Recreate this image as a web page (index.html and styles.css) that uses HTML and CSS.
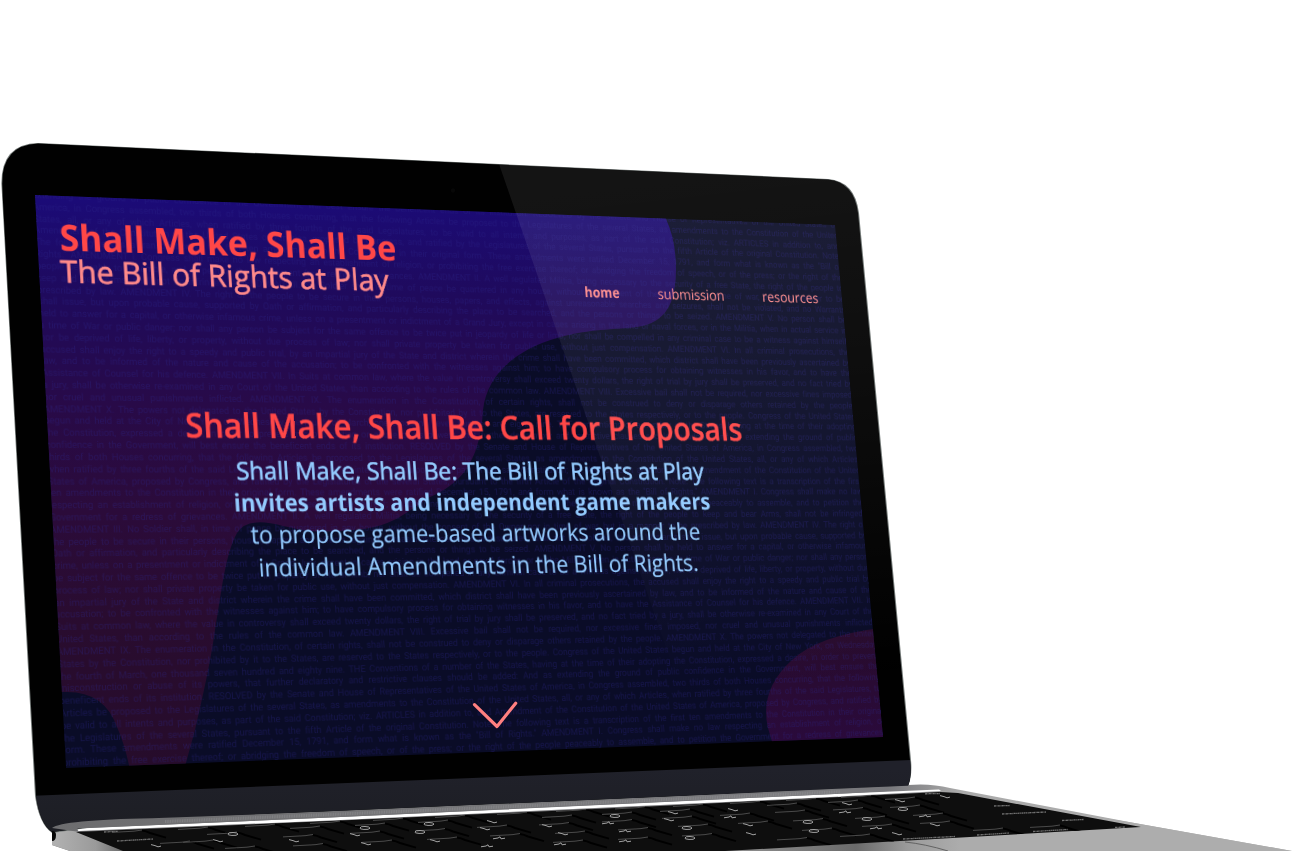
FILE: index.html
```html
<!DOCTYPE html>
<html lang="en">
<head>
<meta charset="utf-8">
<title>Shall Make, Shall Be</title>
<link rel="stylesheet" href="styles.css">
</head>
<body>
<main class="scene">
<svg class="layer" viewBox="0 0 1300 851" aria-hidden="true">
  <defs>
    <linearGradient id="blob" gradientUnits="userSpaceOnUse" x1="0" y1="200" x2="0" y2="768">
      <stop offset="0" stop-color="#1b0b77"/><stop offset=".17" stop-color="#1f0a5c"/>
      <stop offset=".36" stop-color="#280a48"/><stop offset=".55" stop-color="#2b0b3a"/>
      <stop offset=".75" stop-color="#290c2f"/><stop offset="1" stop-color="#260c2b"/>
    </linearGradient>
    <linearGradient id="blob2" x1="0" y1="0" x2="0" y2="1"><stop offset="0" stop-color="#280c2c"/><stop offset="1" stop-color="#2a0a3c"/></linearGradient>
    <linearGradient id="palm" gradientUnits="userSpaceOnUse" x1="700" y1="0" x2="960" y2="0">
      <stop offset="0" stop-color="#999"/><stop offset=".6" stop-color="#6b6b6b"/><stop offset=".8" stop-color="#9b9b9b"/><stop offset="1" stop-color="#acacac"/>
    </linearGradient>
    <linearGradient id="side" gradientUnits="userSpaceOnUse" x1="52" y1="0" x2="125" y2="0">
      <stop offset="0" stop-color="#b2b2b2"/><stop offset=".6" stop-color="#9a9a9a"/><stop offset="1" stop-color="#666"/>
    </linearGradient>
    <linearGradient id="deck" gradientUnits="userSpaceOnUse" x1="50" y1="0" x2="960" y2="0">
      <stop offset="0" stop-color="#6d6d6f"/><stop offset=".85" stop-color="#7b7b7e"/><stop offset=".92" stop-color="#77777b"/><stop offset=".96" stop-color="#8f8f91"/><stop offset="1" stop-color="#ababab"/>
    </linearGradient>
    <linearGradient id="chin" gradientUnits="userSpaceOnUse" x1="0" y1="770" x2="0" y2="825"><stop offset="0" stop-color="#20212a"/><stop offset="1" stop-color="#1d1e24"/></linearGradient>
    <filter id="soft" x="-5%" y="-20%" width="110%" height="140%"><feGaussianBlur stdDeviation=".45"/></filter>
    <clipPath id="display"><path d="M35 195L835 225L883 737L66 768Z"/></clipPath>
    <clipPath id="lid"><path d="M38 143.5L828 179.5Q854 182 858 213L910 760Q912 776 908 786L150 819L52 832Q40 824 36 796L2 184Q2 145 38 143.5Z"/></clipPath>
    <clipPath id="well"><path d="M76 832L330 821L660 806L940 792L958 793L1141 827L900 841L725 851H123Z"/></clipPath>
    <g id="gap"><path d="M-30 2.4L-8 1.2L0 0" stroke="#4a4a4a" stroke-width="1"/><path d="M0 .5Q4 1 8 3L24 7.6" stroke="#000" stroke-width="2" fill="none"/></g>
    <path id="ring" d="M-5 0Q-5 -1.7 0 -1.5T5 .2Q4 1.8 -1 1.4T-5 0Z"/>
    <path id="hook" d="M-5 -1.4L-1 -.4Q2 1.8 5 .1"/>
    <path id="cross" d="M-6 .8L-1 0L1 -1.2L2 .8L6 .2"/>
  </defs>

  <!-- laptop base -->
  <path fill="url(#deck)" d="M52 826Q60 821 150 818L908 785Q930 783 950 788L1133 822.7L1292 851H70L52 845Z"/>
  <path fill="#adadad" d="M930 789L1133 822.7L1292 851H880L880 842L1140 826.5Z"/>
  <path fill="url(#side)" d="M52 828L77 831L126 851H70L52 845Z"/>
  <path fill="url(#palm)" d="M700 852L900 840.7L1000 834V851Z"/>
  <path fill="none" stroke="#626262" d="M905 842Q925 844 948 851"/>
  <path fill="#0e0e0e" d="M76 832L330 821L660 806L940 792L958 793L1141 827L900 841L725 851H123Z"/>
  <g clip-path="url(#well)">
  <g fill="none" filter="url(#soft)">
    <use href="#gap" x="142" y="830"/><use href="#gap" x="208" y="827"/><use href="#gap" x="275" y="824"/><use href="#gap" x="190" y="841"/><use href="#gap" x="213" y="840"/><use href="#gap" x="237" y="832"/>
    <use href="#gap" x="340" y="821"/><use href="#gap" x="403" y="818"/><use href="#gap" x="465" y="815"/><use href="#gap" x="527" y="812"/><use href="#gap" x="320" y="826"/><use href="#gap" x="385" y="823"/><use href="#gap" x="448" y="820"/><use href="#gap" x="313" y="834.5"/><use href="#gap" x="380" y="831"/><use href="#gap" x="445" y="828.5"/><use href="#gap" x="507" y="825"/><use href="#gap" x="323" y="843.5"/><use href="#gap" x="392" y="840"/><use href="#gap" x="457" y="837"/><use href="#gap" x="520" y="833.5"/><use href="#gap" x="255" y="846"/>
    <use href="#gap" x="586" y="809"/><use href="#gap" x="645" y="806.5"/><use href="#gap" x="703" y="804"/><use href="#gap" x="760" y="801"/><use href="#gap" x="572" y="815"/><use href="#gap" x="632" y="812"/><use href="#gap" x="690" y="809"/><use href="#gap" x="569" y="822.5"/><use href="#gap" x="632" y="819.5"/><use href="#gap" x="692" y="816"/><use href="#gap" x="750" y="813"/><use href="#gap" x="585" y="831"/><use href="#gap" x="648" y="827.5"/><use href="#gap" x="708" y="824"/><use href="#gap" x="768" y="821"/><use href="#gap" x="583" y="840"/><use href="#gap" x="648" y="837"/><use href="#gap" x="712" y="833.5"/>
    <use href="#gap" x="816" y="798"/><use href="#gap" x="871" y="795"/><use href="#gap" x="797" y="803"/><use href="#gap" x="858" y="800"/><use href="#gap" x="915" y="797"/><use href="#gap" x="805" y="810"/><use href="#gap" x="863" y="807.5"/><use href="#gap" x="920" y="805"/><use href="#gap" x="823" y="818.5"/><use href="#gap" x="885" y="816"/><use href="#gap" x="943" y="813"/><use href="#gap" x="832" y="828"/><use href="#gap" x="892" y="824"/><use href="#gap" x="950" y="821"/><use href="#gap" x="807" y="837.5"/><use href="#gap" x="870" y="834"/><use href="#gap" x="1003" y="828"/><use href="#gap" x="1060" y="825"/>
  </g>
  <g fill="none" stroke="#a2a2a2" stroke-width="1" filter="url(#soft)">
    <use href="#ring" x="365" y="828"/><use href="#ring" x="429" y="824"/><use href="#hook" x="355" y="835"/><use href="#ring" x="420" y="832"/><use href="#hook" x="492" y="822"/><use href="#hook" x="485" y="829"/><use href="#hook" x="435" y="841"/><use href="#cross" x="499" y="838"/><use href="#hook" x="294" y="841"/><use href="#hook" x="366" y="844"/><use href="#cross" x="487" y="846"/>
    <use href="#ring" x="615" y="816"/><use href="#hook" x="673" y="813"/><use href="#hook" x="733" y="810"/><use href="#cross" x="608" y="823"/><use href="#hook" x="669" y="820"/><use href="#cross" x="730" y="817"/><use href="#hook" x="547" y="826"/><use href="#cross" x="625" y="831"/><use href="#ring" x="687" y="828"/><use href="#hook" x="748" y="825"/><use href="#hook" x="563" y="834"/><use href="#cross" x="560" y="844"/><use href="#cross" x="625" y="841"/><use href="#ring" x="690" y="838"/><use href="#hook" x="751" y="834"/>
    <use href="#hook" x="847" y="804"/><use href="#cross" x="845" y="812"/><use href="#ring" x="903" y="809"/><use href="#ring" x="867" y="819"/><use href="#cross" x="925" y="816"/><use href="#ring" x="808" y="822"/><use href="#ring" x="814" y="831"/><use href="#cross" x="876" y="828"/><use href="#hook" x="935" y="825"/><use href="#hook" x="897" y="834"/><use href="#hook" x="900" y="801"/><use href="#hook" x="945" y="797"/><use href="#ring" x="233" y="834"/><use href="#hook" x="156" y="846"/><use href="#hook" x="218" y="841"/>
  </g>
  <g fill="none" stroke="#707070" stroke-width="1.3" stroke-dasharray="2 .5 1 .4" filter="url(#soft)">
    <path d="M117 841L153 839M104 832L118 831.3M994 806L1010 805.5M1002 814L1046 812M1062 820.5L1084 819.5M1033 831.5L1068 829.5M977 835L1009 833M903 839L955 836.5M1115 827.5L1125 827M925 793.8L940 793.5"/>
  </g>
  </g>
  <path fill="none" stroke="#fff" stroke-width="2.8" stroke-linecap="round" d="M79 829.7L330 819L660 803.6L840 795.2"/>
  <path fill="#fff" d="M838 793.8L939 789.5L941 791L838 796.5Z"/>

  <!-- lid, bezel and chin -->
  <path fill="#747a78" d="M38 143L828 179Q855 181 859 213L911 760Q912.5 776 908 786L150 819L52 833Q39 824 35 796L1.4 184Q1 144 38 143Z"/>
  <g clip-path="url(#lid)">
    <path fill="#010101" d="M2.4 143H915V835H0Z"/>
    <path fill="url(#chin)" d="M30 796L911 760L915 835H30Z"/>
  </g>
  <path fill="url(#deck)" d="M52 828Q62 820 152 818.3L330 811.8L660 797.2L832 789L925 785L905 790L840 793.7L660 802L330 817.4L78 828.4Q74 830 80 832Z"/>
  <path fill="none" stroke="#a0a0a3" stroke-width="3.2" stroke-dasharray="1 .7" opacity=".35" d="M165 821.5L330 814.5L660 799.8L840 791.8"/>
  <path fill="#050505" d="M52 831Q56 831 56 835Q56 841 52 841Z"/>
  <circle cx="453" cy="190.5" r="2.2" fill="#070707"/>

  <!-- display artwork -->
  <g clip-path="url(#display)">
    <path fill="#0a0c27" d="M30 190H890V770H30Z"/>
    <path fill="url(#blob)" d="M30 190H658L666 219Q676 240 676 270Q676 288 671 302Q662 325 633 327.5C600 330 580 331 557 338C515 350 487 375 483 410C480 465 458 485 430 497C410 510 395 524 367 528.5C310 535 305 530 283 526Q247 516 237 533C225 555 222 590 215 630C210 665 203 695 195 730L184 770H130Q125 745 117 727Q104 690 63 692L30 690Z"/>
    <path fill="url(#blob2)" d="M890 627Q820 634 792 660Q759 690 768 728L773 745H890Z"/>
  </g>
</svg>

<section class="display">
  <div class="print" aria-hidden="true">
    <p>extending the ground of public confidence in the Government, will best ensure the beneficent ends of its institution. RESOLVED by the Senate and House of Representatives of the United States of</p>
    <p>America, in Congress assembled, two thirds of both Houses concurring, that the following Articles be proposed to the Legislatures of the several States, as amendments to the Constitution of the United</p>
    <p>States, all, or any of which Articles, when ratified by three fourths of the said Legislatures, to be valid to all intents and purposes, as part of the said Constitution; viz. ARTICLES in addition to, and</p>
    <p>Amendment of the Constitution of the United States of America, proposed by Congress, and ratified by the Legislatures of the several States, pursuant to the fifth Article of the original Constitution. Note:</p>
    <p>The following text is a transcription of the first ten amendments to the Constitution in their original form. These amendments were ratified December 15, 1791, and form what is known as the "Bill of</p>
    <p>Rights." AMENDMENT I. Congress shall make no law respecting an establishment of religion, or prohibiting the free exercise thereof; or abridging the freedom of speech, or of the press; or the right of the</p>
    <p>people peaceably to assemble, and to petition the Government for a redress of grievances. AMENDMENT II. A well regulated Militia, being necessary to the security of a free State, the right of the people to</p>
    <p>keep and bear Arms, shall not be infringed. AMENDMENT III. No Soldier shall, in time of peace be quartered in any house, without the consent of the Owner, nor in time of war, but in a manner to be</p>
    <p>prescribed by law. AMENDMENT IV. The right of the people to be secure in their persons, houses, papers, and effects, against unreasonable searches and seizures, shall not be violated, and no Warrants</p>
    <p>shall issue, but upon probable cause, supported by Oath or affirmation, and particularly describing the place to be searched, and the persons or things to be seized. AMENDMENT V. No person shall be</p>
    <p>held to answer for a capital, or otherwise infamous crime, unless on a presentment or indictment of a Grand Jury, except in cases arising in the land or naval forces, or in the Militia, when in actual service in</p>
    <p>a time of War or public danger; nor shall any person be subject for the same offence to be twice put in jeopardy of life or limb; nor shall be compelled in any criminal case to be a witness against himself,</p>
    <p>nor be deprived of life, liberty, or property, without due process of law; nor shall private property be taken for public use, without just compensation. AMENDMENT VI. In all criminal prosecutions, the</p>
    <p>accused shall enjoy the right to a speedy and public trial, by an impartial jury of the State and district wherein the crime shall have been committed, which district shall have been previously ascertained by</p>
    <p>law, and to be informed of the nature and cause of the accusation; to be confronted with the witnesses against him; to have compulsory process for obtaining witnesses in his favor, and to have the</p>
    <p>Assistance of Counsel for his defence. AMENDMENT VII. In Suits at common law, where the value in controversy shall exceed twenty dollars, the right of trial by jury shall be preserved, and no fact tried by</p>
    <p>a jury, shall be otherwise re-examined in any Court of the United States, than according to the rules of the common law. AMENDMENT VIII. Excessive bail shall not be required, nor excessive fines imposed,</p>
    <p>nor cruel and unusual punishments inflicted. AMENDMENT IX. The enumeration in the Constitution, of certain rights, shall not be construed to deny or disparage others retained by the people.</p>
    <p>AMENDMENT X. The powers not delegated to the United States by the Constitution, nor prohibited by it to the States, are reserved to the States respectively, or to the people. Congress of the United States</p>
    <p>begun and held at the City of New York, on Wednesday the fourth of March, one thousand seven hundred and eighty nine. THE Conventions of a number of the States, having at the time of their adopting</p>
    <p>the Constitution, expressed a desire, in order to prevent misconstruction or abuse of its powers, that further declaratory and restrictive clauses should be added: And as extending the ground of public</p>
    <p>confidence in the Government, will best ensure the beneficent ends of its institution. RESOLVED by the Senate and House of Representatives of the United States of America, in Congress assembled, two</p>
    <p>thirds of both Houses concurring, that the following Articles be proposed to the Legislatures of the several States, as amendments to the Constitution of the United States, all, or any of which Articles,</p>
    <p>when ratified by three fourths of the said Legislatures, to be valid to all intents and purposes, as part of the said Constitution; viz. ARTICLES in addition to, and Amendment of the Constitution of the United</p>
    <p>States of America, proposed by Congress, and ratified by the Legislatures of the several States, pursuant to the fifth Article of the original Constitution. Note: The following text is a transcription of the first</p>
    <p>ten amendments to the Constitution in their original form. These amendments were ratified December 15, 1791, and form what is known as the "Bill of Rights." AMENDMENT I. Congress shall make no law</p>
    <p>respecting an establishment of religion, or prohibiting the free exercise thereof; or abridging the freedom of speech, or of the press; or the right of the people peaceably to assemble, and to petition the</p>
    <p>Government for a redress of grievances. AMENDMENT II. A well regulated Militia, being necessary to the security of a free State, the right of the people to keep and bear Arms, shall not be infringed.</p>
    <p>AMENDMENT III. No Soldier shall, in time of peace be quartered in any house, without the consent of the Owner, nor in time of war, but in a manner to be prescribed by law. AMENDMENT IV. The right of</p>
    <p>the people to be secure in their persons, houses, papers, and effects, against unreasonable searches and seizures, shall not be violated, and no Warrants shall issue, but upon probable cause, supported by</p>
    <p>Oath or affirmation, and particularly describing the place to be searched, and the persons or things to be seized. AMENDMENT V. No person shall be held to answer for a capital, or otherwise infamous</p>
    <p>crime, unless on a presentment or indictment of a Grand Jury, except in cases arising in the land or naval forces, or in the Militia, when in actual service in time of War or public danger; nor shall any person</p>
    <p>be subject for the same offence to be twice put in jeopardy of life or limb; nor shall be compelled in any criminal case to be a witness against himself, nor be deprived of life, liberty, or property, without due</p>
    <p>process of law; nor shall private property be taken for public use, without just compensation. AMENDMENT VI. In all criminal prosecutions, the accused shall enjoy the right to a speedy and public trial by</p>
    <p>an impartial jury of the State and district wherein the crime shall have been committed, which district shall have been previously ascertained by law, and to be informed of the nature and cause of the</p>
    <p>accusation; to be confronted with the witnesses against him; to have compulsory process for obtaining witnesses in his favor, and to have the Assistance of Counsel for his defence. AMENDMENT VII. In</p>
    <p>Suits at common law, where the value in controversy shall exceed twenty dollars, the right of trial by jury shall be preserved, and no fact tried by a jury, shall be otherwise re-examined in any Court of the</p>
    <p>United States, than according to the rules of the common law. AMENDMENT VIII. Excessive bail shall not be required, nor excessive fines imposed, nor cruel and unusual punishments inflicted.</p>
    <p>AMENDMENT IX. The enumeration in the Constitution, of certain rights, shall not be construed to deny or disparage others retained by the people. AMENDMENT X. The powers not delegated to the United</p>
    <p>States by the Constitution, nor prohibited by it to the States, are reserved to the States respectively, or to the people. Congress of the United States begun and held at the City of New York, on Wednesday</p>
    <p>the fourth of March, one thousand seven hundred and eighty nine. THE Conventions of a number of the States, having at the time of their adopting the Constitution, expressed a desire, in order to prevent</p>
    <p>misconstruction or abuse of its powers, that further declaratory and restrictive clauses should be added: And as extending the ground of public confidence in the Government, will best ensure the</p>
    <p>beneficent ends of its institution. RESOLVED by the Senate and House of Representatives of the United States of America, in Congress assembled, two thirds of both Houses concurring, that the following</p>
    <p>Articles be proposed to the Legislatures of the several States, as amendments to the Constitution of the United States, all, or any of which Articles, when ratified by three fourths of the said Legislatures, to</p>
    <p>be valid to all intents and purposes, as part of the said Constitution; viz. ARTICLES in addition to, and Amendment of the Constitution of the United States of America, proposed by Congress, and ratified by</p>
    <p>the Legislatures of the several States, pursuant to the fifth Article of the original Constitution. Note: The following text is a transcription of the first ten amendments to the Constitution in their original</p>
    <p>form. These amendments were ratified December 15, 1791, and form what is known as the "Bill of Rights." AMENDMENT I. Congress shall make no law respecting an establishment of religion, or</p>
    <p>prohibiting the free exercise thereof; or abridging the freedom of speech, or of the press; or the right of the people peaceably to assemble, and to petition the Government for a redress of grievances.</p>
  </div>
  <svg class="copy" viewBox="0 0 900 560">
    <text class="brand" x="22.5" y="55" textLength="356" lengthAdjust="spacingAndGlyphs">Shall Make, Shall Be</text>
    <text class="tagline" x="21.5" y="86.6" textLength="346" lengthAdjust="spacingAndGlyphs">The Bill of Rights at Play</text>
    <text class="nav active" x="589" y="88.3" textLength="41" lengthAdjust="spacingAndGlyphs">home</text>
    <text class="nav" x="675" y="88" textLength="80" lengthAdjust="spacingAndGlyphs">submission</text>
    <text class="nav" x="801" y="88" textLength="69.5" lengthAdjust="spacingAndGlyphs">resources</text>
    <text class="heading" x="140" y="240" textLength="622" lengthAdjust="spacingAndGlyphs">Shall Make, Shall Be: Call for Proposals</text>
    <text class="lead medium" x="190" y="281.5" textLength="521.5" lengthAdjust="spacingAndGlyphs">Shall Make, Shall Be: The Bill of Rights at Play</text>
    <text class="lead strong" x="185.5" y="314" textLength="531" lengthAdjust="spacingAndGlyphs">invites artists and independent game makers</text>
    <text class="lead" x="201" y="346" textLength="500.5" lengthAdjust="spacingAndGlyphs">to propose game-based artworks around the</text>
    <text class="lead" x="207" y="379" textLength="489" lengthAdjust="spacingAndGlyphs">individual Amendments in the Bill of Rights.</text>
  </svg>
</section>

<svg class="layer" viewBox="0 0 1300 851" aria-hidden="true">
  <defs>
    <linearGradient id="gloss" gradientUnits="userSpaceOnUse" x1="660" y1="170" x2="720" y2="700">
      <stop offset="0" stop-color="#fff" stop-opacity=".08"/><stop offset=".4" stop-color="#fff" stop-opacity=".055"/><stop offset="1" stop-color="#fff" stop-opacity="0"/>
    </linearGradient>
  </defs>
  <path fill="none" stroke="#ff8080" stroke-width="3.2" stroke-linecap="round" stroke-linejoin="round" d="M474.5 704.7L497 726.5L515.7 703.2"/>
  <path fill="url(#gloss)" clip-path="url(#lid)" d="M499 164L860 180L915 740L684 700Z"/>
</svg>
</main>
</body>
</html>
```
FILE: styles.css
```css
body {
  margin: 0;
  background: #fff;
  overflow: hidden;
}

.scene {
  position: relative;
  width: 1300px;
  height: 851px;
  overflow: hidden;
}

.layer {
  position: absolute;
  inset: 0;
  width: 1300px;
  height: 851px;
}

/* Flat 900x560 page projected onto the laptop display */
.display {
  position: absolute;
  top: 0;
  left: 0;
  width: 900px;
  height: 560px;
  overflow: hidden;
  transform-origin: 0 0;
  transform: matrix3d(0.997869, 0.062699, 0, 0.000130514,
    0.052091, 0.985213, 0, -0.0000494804,
    0, 0, 1, 0,
    35, 195, 0, 1);
}

.print {
  width: 906px;
  margin: -5px 0 0 -3px;
  color: rgba(44, 38, 140, 0.34);
  font-family: Roboto, sans-serif;
  font-size: 9.6px;
  letter-spacing: -0.06px;
  word-spacing: -0.4px;
  line-height: 11.82px;
  text-rendering: geometricPrecision;
}

.print p {
  height: 11.82px;
  margin: 0;
  text-align: justify;
  text-align-last: justify;
}

.copy {
  position: absolute;
  inset: 0;
  width: 900px;
  height: 560px;
  font-family: "Open Sans", "Noto Sans", sans-serif;
  text-rendering: geometricPrecision;
}

.brand {
  fill: #ff4747;
  font-size: 36.5px;
  font-weight: 700;
}

.tagline {
  fill: #ff8a8a;
  stroke: #ff8a8a;
  stroke-width: 0.6px;
  font-size: 31px;
}

.nav {
  fill: #ff8a8a;
  font-size: 15.5px;
}

.active {
  font-weight: 700;
}

.heading {
  fill: #ff4747;
  stroke: #ff4747;
  stroke-width: 0.4px;
  font-size: 34px;
  font-weight: 600;
}

.lead {
  fill: #93cbff;
  stroke: #93cbff;
  stroke-width: 0.15px;
  font-size: 24.5px;
}

.medium {
  stroke-width: 0.6px;
}

.strong {
  stroke-width: 0;
  font-weight: 700;
}
```
